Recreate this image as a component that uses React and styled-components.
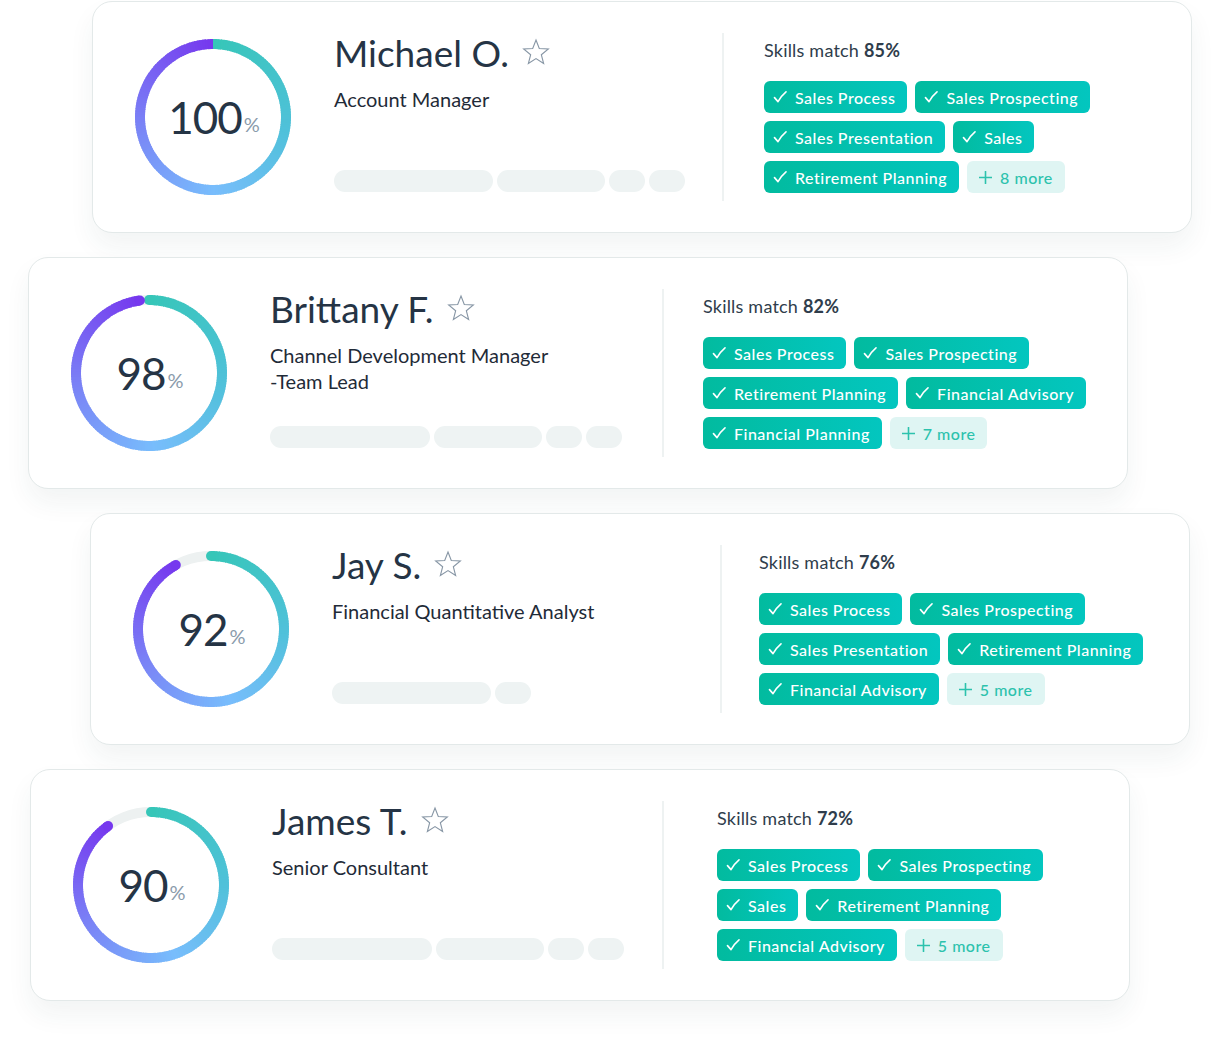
import React from "react";
import styled, { createGlobalStyle } from "styled-components";

const GlobalStyle = createGlobalStyle`
	body {
		margin: 0;
		background: #ffffff;
		font-family: "Lato", "Open Sans", sans-serif;
		color: #253445;
	}
`;

const candidates = [
	{
		name: "Michael O.",
		title: ["Account Manager"],
		score: 100,
		skills: 85,
		offset: 92,
		split: [36, 40],
		bars: [159, 108, 36, 36],
		rows: [
			["Sales Process", "Sales Prospecting"],
			["Sales Presentation", "Sales"],
			["Retirement Planning"],
		],
		more: 8,
	},
	{
		name: "Brittany F.",
		title: ["Channel Development Manager", "-Team Lead"],
		score: 98,
		skills: 82,
		offset: 28,
		split: [40, 39],
		bars: [160, 108, 36, 36],
		rows: [
			["Sales Process", "Sales Prospecting"],
			["Retirement Planning", "Financial Advisory"],
			["Financial Planning"],
		],
		more: 7,
	},
	{
		name: "Jay S.",
		title: ["Financial Quantitative Analyst"],
		score: 92,
		skills: 76,
		offset: 90,
		split: [36, 37],
		bars: [159, 36],
		rows: [
			["Sales Process", "Sales Prospecting"],
			["Sales Presentation", "Retirement Planning"],
			["Financial Advisory"],
		],
		more: 5,
	},
	{
		name: "James T.",
		title: ["Senior Consultant"],
		score: 90,
		skills: 72,
		offset: 30,
		split: [38, 53],
		bars: [160, 108, 36, 36],
		rows: [
			["Sales Process", "Sales Prospecting"],
			["Sales", "Retirement Planning"],
			["Financial Advisory"],
		],
		more: 5,
	},
];

// colour stops along the gauge arc (0 = top, 1 = end of arc)
const stops = [
	[0, [54, 198, 184]],
	[0.28, [80, 193, 218]],
	[0.5, [120, 189, 252]],
	[0.74, [122, 130, 246]],
	[1, [118, 56, 238]],
];

const colorAt = (t) => {
	for (let i = 0; i < stops.length - 1; i++) {
		const [a, ca] = stops[i];
		const [b, cb] = stops[i + 1];
		if (t <= b) {
			const k = (t - a) / (b - a);
			const c = ca.map((v, j) => Math.round(v + (cb[j] - v) * k));
			return `rgb(${c.join(",")})`;
		}
	}
	return "rgb(118,56,238)";
};

const SIZE = 156;
const C = SIZE / 2;
const R = 73;
const STROKE = 10;

const point = (deg) => {
	const rad = (deg * Math.PI) / 180;
	return [C + R * Math.sin(rad), C - R * Math.cos(rad)];
};

const Gauge = ({ value }) => {
	const arc = (value / 100) * 360;
	const count = Math.ceil(arc / 2);
	const segments = [];
	for (let i = 0; i < count; i++) {
		const a0 = (i * arc) / count;
		const a1 = Math.min(((i + 1) * arc) / count + 0.7, arc);
		const [x0, y0] = point(a0);
		const [x1, y1] = point(a1);
		segments.push(
			<path
				key={i}
				d={`M ${x0} ${y0} A ${R} ${R} 0 0 1 ${x1} ${y1}`}
				stroke={colorAt((a0 + a1) / 2 / arc)}
				strokeWidth={STROKE}
				fill="none"
			/>
		);
	}
	const [ex, ey] = point(arc);
	return (
		<Ring>
			<svg width={SIZE} height={SIZE} viewBox={`0 0 ${SIZE} ${SIZE}`}>
				<circle cx={C} cy={C} r={R} stroke="#edf1f1" strokeWidth={STROKE} fill="none" />
				{segments}
				{value < 100 && (
					<>
						<circle cx={C} cy={C - R} r={STROKE / 2} fill={colorAt(0)} />
						<circle cx={ex} cy={ey} r={STROKE / 2} fill={colorAt(1)} />
					</>
				)}
			</svg>
			<Score>
				{value}
				<small>%</small>
			</Score>
		</Ring>
	);
};

const Star = () => {
	const pts = [];
	for (let i = 0; i < 10; i++) {
		const r = i % 2 === 0 ? 13 : 5.6;
		const a = (i * 36 * Math.PI) / 180;
		pts.push(`${(14 + r * Math.sin(a)).toFixed(2)},${(15 - r * Math.cos(a)).toFixed(2)}`);
	}
	return (
		<svg width="28" height="28" viewBox="0 0 28 28">
			<polygon points={pts.join(" ")} fill="none" stroke="#8796a5" strokeWidth="1.1" strokeLinejoin="miter" />
		</svg>
	);
};

const Check = () => (
	<svg width="14" height="14" viewBox="0 0 14 14">
		<path d="M1.5 7.6 L5 11.6 Q8.5 5.5 13 1.8" fill="none" stroke="#fff" strokeWidth="1.6" strokeLinecap="round" strokeLinejoin="round" />
	</svg>
);

const Plus = () => (
	<svg width="13" height="13" viewBox="0 0 13 13">
		<path d="M6.5 0.5 V12.5 M0.5 6.5 H12.5" stroke="#2cc2ad" strokeWidth="1.6" strokeLinecap="round" />
	</svg>
);

const App = () => {
	return (
		<>
			<GlobalStyle />
			<Page>
				{candidates.map((c) => (
					<Card key={c.name} $offset={c.offset}>
						<Gauge value={c.score} />
						<Info>
							<NameRow>
								<h2>{c.name}</h2>
								<Star />
							</NameRow>
							<JobTitle>
								{c.title.map((line) => (
									<span key={line}>{line}</span>
								))}
							</JobTitle>
							<Bars>
								{c.bars.map((w, i) => (
									<Bar key={i} $width={w} />
								))}
							</Bars>
						</Info>
						<Divider $gap={c.split[0]} />
						<Skills $gap={c.split[1]}>
							<p>
								Skills match <b>{c.skills}%</b>
							</p>
							<TagRows>
								{c.rows.map((row, i) => (
									<TagRow key={i}>
										{row.map((skill) => (
											<Tag key={skill}>
												<Check />
												{skill}
											</Tag>
										))}
										{i === c.rows.length - 1 && (
											<More>
												<Plus />
												{c.more} more
											</More>
										)}
									</TagRow>
								))}
							</TagRows>
						</Skills>
					</Card>
				))}
			</Page>
		</>
	);
};

const Page = styled.main`
	width: 1220px;
	padding: 1px 0 40px;
	display: flex;
	flex-direction: column;
	gap: 24px;
`;

const Card = styled.section`
	box-sizing: border-box;
	width: 1100px;
	height: 232px;
	margin-left: ${(p) => p.$offset}px;
	padding: 0 40px 0 42px;
	display: flex;
	align-items: center;
	background: #ffffff;
	border: 1px solid #e3e9e9;
	border-radius: 20px;
	box-shadow: 0 14px 26px rgba(40, 70, 70, 0.06);
`;

const Ring = styled.div`
	position: relative;
	width: 156px;
	height: 156px;
	flex-shrink: 0;
	svg {
		display: block;
	}
`;

const Score = styled.div`
	position: absolute;
	inset: 0;
	display: flex;
	align-items: center;
	justify-content: center;
	padding-left: 2px;
	font-size: 44px;
	line-height: 1;
	color: #253445;
	letter-spacing: -1px;
	small {
		font-size: 20px;
		color: #8a9bab;
		margin-top: 14px;
		margin-left: 2px;
		letter-spacing: 0;
	}
`;

const Info = styled.div`
	width: 352px;
	height: 168px;
	margin-left: 43px;
	display: flex;
	flex-direction: column;
	flex-shrink: 0;
`;

const NameRow = styled.div`
	display: flex;
	align-items: center;
	gap: 13px;
	height: 40px;
	h2 {
		margin: 0;
		font-size: 37px;
		font-weight: 400;
		line-height: 40px;
		color: #253445;
	}
	svg {
		margin-top: -2px;
	}
`;

const JobTitle = styled.div`
	margin-top: 13px;
	display: flex;
	flex-direction: column;
	font-size: 20px;
	line-height: 26px;
	color: #1f2b38;
`;

const Bars = styled.div`
	margin-top: auto;
	margin-bottom: 9px;
	display: flex;
	gap: 4px;
`;

const Bar = styled.div`
	width: ${(p) => p.$width}px;
	height: 22px;
	border-radius: 11px;
	background: #eef3f3;
`;

const Divider = styled.div`
	width: 2px;
	height: 168px;
	margin-left: ${(p) => p.$gap}px;
	background: #eef2f2;
	flex-shrink: 0;
`;

const Skills = styled.div`
	height: 168px;
	margin-left: ${(p) => p.$gap}px;
	display: flex;
	flex-direction: column;
	p {
		margin: 5px 0 0;
		font-size: 18px;
		line-height: 24px;
		color: #2f3d4c;
		letter-spacing: 0.2px;
	}
	b {
		font-weight: 700;
	}
`;

const TagRows = styled.div`
	margin-top: 19px;
	display: flex;
	flex-direction: column;
	gap: 8px;
`;

const TagRow = styled.div`
	display: flex;
	gap: 8px;
`;

const Tag = styled.span`
	height: 32px;
	padding: 0 12px 0 9px;
	display: inline-flex;
	align-items: center;
	gap: 8px;
	border-radius: 6px;
	background: linear-gradient(90deg, #02bb9f, #03c6bf);
	color: #ffffff;
	font-size: 16px;
	font-weight: 500;
	letter-spacing: 0.5px;
	white-space: nowrap;
`;

const More = styled.span`
	height: 32px;
	padding: 0 12px;
	display: inline-flex;
	align-items: center;
	gap: 8px;
	border-radius: 6px;
	background: #dff5f3;
	color: #2cc2ad;
	font-size: 16px;
	font-weight: 500;
	letter-spacing: 0.5px;
	white-space: nowrap;
`;

export default App;
